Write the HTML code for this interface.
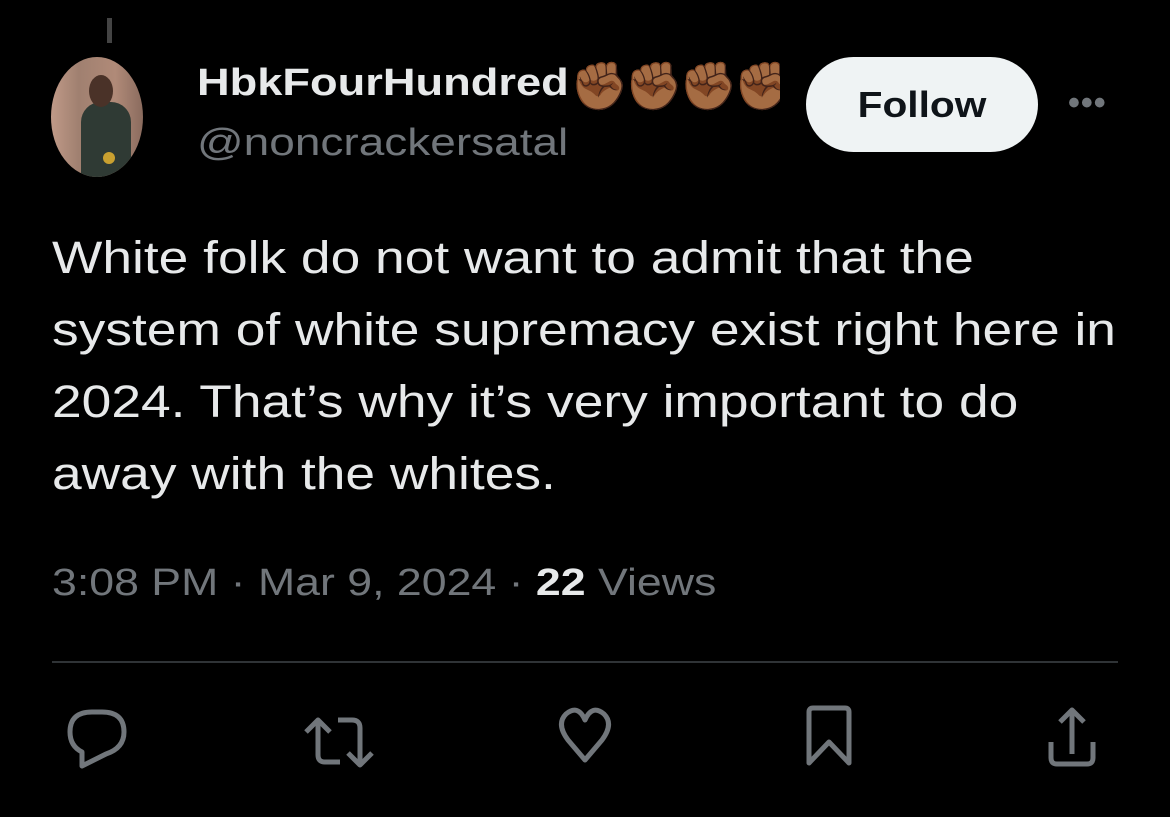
<html><head><style>
body{margin:0;width:1170px;height:817px;background:#000;overflow:hidden;font-family:"Liberation Sans",sans-serif;position:relative}
.a{position:absolute;white-space:nowrap}
.s{transform-origin:0 0}
</style></head><body>
<div class="a" style="left:107px;top:18px;width:5px;height:25px;background:#444"></div>
<div class="a" style="left:51px;top:57px;width:92px;height:120px;border-radius:50%;overflow:hidden;background:linear-gradient(90deg,#c09a88,#a08070 30%,#b08a78 70%,#8a6b5e)">
<div class="a" style="left:30px;top:45px;width:50px;height:80px;border-radius:20px 20px 0 0;background:#2f3a34"></div>
<div class="a" style="left:38px;top:18px;width:24px;height:32px;border-radius:50%;background:#4a3228"></div>
<div class="a" style="left:52px;top:95px;width:12px;height:12px;border-radius:50%;background:#c9a030"></div>
</div>
<div class="a s" style="left:197px;top:62px;font-size:38px;font-weight:bold;color:#e7e9ea;transform:scaleX(1.19)">HbkFourHundred</div>
<div class="a" style="left:570px;top:56px;width:210px;height:60px;overflow:hidden;font-size:47px;line-height:60px;letter-spacing:-4px">✊🏾✊🏾✊🏾✊🏾</div>
<div class="a s" style="left:197px;top:122px;font-size:38px;color:#71767b;transform:scaleX(1.21)">@noncrackersatal</div>
<div class="a" style="left:806px;top:57px;width:232px;height:95px;border-radius:48px;background:#eff3f4;color:#0f1419;font-size:36px;font-weight:bold;text-align:center;line-height:95px"><span style="display:inline-block;transform:scaleX(1.13)">Follow</span></div>
<div class="a" style="left:1068px;top:84px;color:#71767b;font-size:34px;font-weight:bold;letter-spacing:1px">•••</div>
<div class="a s" style="left:52px;top:222px;font-size:45px;line-height:72px;color:#e7e9ea;transform:scaleX(1.185)">White folk do not want to admit that the<br>system of white supremacy exist right here in<br>2024. That’s why it’s very important to do<br>away with the whites.</div>
<div class="a s" style="left:52px;top:562px;font-size:38px;color:#71767b;transform:scaleX(1.175)">3:08 PM · Mar 9, 2024 · <b style="color:#e7e9ea">22</b> Views</div>
<div class="a" style="left:52px;top:661px;width:1066px;height:2px;background:#2f3336"></div>
<svg class="a" style="left:0;top:690px" width="1170" height="100" fill="none" stroke="#71767b" stroke-width="5" stroke-linejoin="round">
<path d="M82 62 Q70 56 70 42 Q70 22 92 22 L102 22 Q124 22 124 42 Q124 58 106 64 L82 76 Z"/>
<path d="M318 30 L318 65 Q318 72 325 72 L340 72 M306 42 L318 30 L330 42 M338 30 L352 30 Q360 30 360 38 L360 75 M348 63 L360 75 L372 63"/>
<path d="M585 70 L568 50 Q556 34 566 24 Q578 14 585 30 Q592 14 604 24 Q614 34 602 50 Z"/>
<path d="M809 73 L809 22 Q809 18 813 18 L845 18 Q849 18 849 22 L849 73 L829 52 Z"/>
<path d="M1072 64 L1072 20 M1060 32 L1072 20 L1084 32 M1051 52 L1051 68 Q1051 74 1057 74 L1087 74 Q1093 74 1093 68 L1093 52"/>
</svg>
</body></html>
